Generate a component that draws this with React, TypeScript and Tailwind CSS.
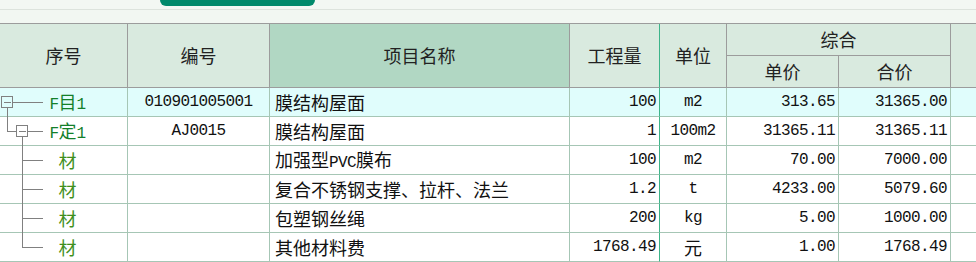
import React from "react";

const CJK = "font-['Noto_Sans_CJK_SC',sans-serif] text-[18px]";
const MONO = "font-['Liberation_Mono','Noto_Sans_CJK_SC',monospace] text-[16px] tracking-[-0.6px]";

const cols = "grid grid-cols-[128px_142px_300px_90px_67px_112px_112px_25px]";

const hb = "border-r border-b border-[#9c9c9c] flex items-center justify-center text-[#222] " + CJK;
const bb = "border-r border-b border-[#a6c6b5] flex items-center h-[29px] text-[#111]";

type Row = {
  tree: "root" | "sub" | "mid" | "last";
  label: string;
  code: string;
  name: React.ReactNode;
  qty: string;
  unit: React.ReactNode;
  price: string;
  total: string;
  bg?: string;
};

function Tree({ kind }: { kind: Row["tree"] }) {
  const c = "#808080";
  return (
    <svg width="45" height="28" className="shrink-0 overflow-visible" shapeRendering="crispEdges">
      {kind === "root" && (
        <>
          <rect x="1.5" y="8.5" width="11" height="11" fill="none" stroke={c} />
          <line x1="4" y1="14.5" x2="11" y2="14.5" stroke={c} />
          <line x1="13" y1="14.5" x2="43" y2="14.5" stroke={c} />
          <line x1="7.5" y1="20" x2="7.5" y2="29" stroke={c} />
        </>
      )}
      {kind === "sub" && (
        <>
          <line x1="7.5" y1="0" x2="7.5" y2="14.5" stroke={c} />
          <line x1="7.5" y1="14.5" x2="16" y2="14.5" stroke={c} />
          <rect x="16.5" y="8.5" width="11" height="11" fill="none" stroke={c} />
          <line x1="19" y1="14.5" x2="26" y2="14.5" stroke={c} />
          <line x1="28" y1="14.5" x2="43" y2="14.5" stroke={c} />
          <line x1="22.5" y1="20" x2="22.5" y2="29" stroke={c} />
        </>
      )}
      {kind === "mid" && (
        <>
          <line x1="22.5" y1="0" x2="22.5" y2="29" stroke={c} />
          <line x1="22.5" y1="14.5" x2="43" y2="14.5" stroke={c} />
        </>
      )}
      {kind === "last" && (
        <>
          <line x1="22.5" y1="0" x2="22.5" y2="14.5" stroke={c} />
          <line x1="22.5" y1="14.5" x2="43" y2="14.5" stroke={c} />
        </>
      )}
    </svg>
  );
}

function Label({ text }: { text: string }) {
  if (text === "材") {
    return <span className={CJK + " text-[#3f8f1c]"}>材</span>;
  }
  return (
    <span className="text-[#13802a] whitespace-nowrap">
      <span className={MONO}>{text[0]}</span>
      <span className={CJK}>{text[1]}</span>
      <span className={MONO}>{text.slice(2)}</span>
    </span>
  );
}

const rows: Row[] = [
  {
    tree: "root",
    label: "F目1",
    code: "010901005001",
    name: "膜结构屋面",
    qty: "100",
    unit: <span className={MONO}>m2</span>,
    price: "313.65",
    total: "31365.00",
    bg: "bg-[#e0fdfc]",
  },
  {
    tree: "sub",
    label: "F定1",
    code: "AJ0015",
    name: "膜结构屋面",
    qty: "1",
    unit: <span className={MONO}>100m2</span>,
    price: "31365.11",
    total: "31365.11",
  },
  {
    tree: "mid",
    label: "材",
    code: "",
    name: (
      <>
        加强型<span className={MONO}>PVC</span>膜布
      </>
    ),
    qty: "100",
    unit: <span className={MONO}>m2</span>,
    price: "70.00",
    total: "7000.00",
  },
  {
    tree: "mid",
    label: "材",
    code: "",
    name: "复合不锈钢支撑、拉杆、法兰",
    qty: "1.2",
    unit: <span className={MONO}>t</span>,
    price: "4233.00",
    total: "5079.60",
  },
  {
    tree: "mid",
    label: "材",
    code: "",
    name: "包塑钢丝绳",
    qty: "200",
    unit: <span className={MONO}>kg</span>,
    price: "5.00",
    total: "1000.00",
  },
  {
    tree: "last",
    label: "材",
    code: "",
    name: "其他材料费",
    qty: "1768.49",
    unit: <span className={CJK}>元</span>,
    price: "1.00",
    total: "1768.49",
  },
];

export default function App() {
  return (
    <div className="w-[976px] h-[262px] overflow-hidden bg-white">
      <div className="h-[9px] bg-[#f3f7f3] flex">
        <div className="ml-[160px] w-[155px] h-[6px] bg-[#00896b] rounded-b-[6px]" />
      </div>
      <div className="h-px bg-[#dde3dd]" />
      <div className="h-[13px] bg-[#f2f7f2]" />

      {/* header */}
      <div className={cols + " grid-rows-[32px_32px] border-t border-[#9c9c9c] bg-[#d9eadf]"}>
        <div className={hb + " row-span-2"}>序号</div>
        <div className={hb + " row-span-2"}>编号</div>
        <div className={hb + " row-span-2 bg-[#b1d7c3]"}>项目名称</div>
        <div className={hb + " row-span-2 !border-r-[#3db48a]"}>工程量</div>
        <div className={hb + " row-span-2"}>单位</div>
        <div className={hb + " col-span-2"}>综合</div>
        <div className={hb + " row-span-2 border-r-0"} />
        <div className={hb}>单价</div>
        <div className={hb}>合价</div>
      </div>

      {/* body */}
      {rows.map((r, i) => (
        <div key={i} className={cols + " " + (r.bg ?? "bg-white")}>
          <div className={bb}>
            <Tree kind={r.tree} />
            <div className="w-[45px] flex justify-center">
              <Label text={r.label} />
            </div>
          </div>
          <div className={bb + " justify-center"}>
            <span className={MONO}>{r.code}</span>
          </div>
          <div className={bb + " pl-[5px]"}>
            <span className={CJK + " whitespace-nowrap"}>{r.name}</span>
          </div>
          <div className={bb + " justify-end pr-[3px] !border-r-[#3db48a]"}>
            <span className={MONO}>{r.qty}</span>
          </div>
          <div className={bb + " justify-center"}>{r.unit}</div>
          <div className={bb + " justify-end pr-[3px]"}>
            <span className={MONO}>{r.price}</span>
          </div>
          <div className={bb + " justify-end pr-[3px]"}>
            <span className={MONO}>{r.total}</span>
          </div>
          <div className={bb + " border-r-0"} />
        </div>
      ))}
    </div>
  );
}
